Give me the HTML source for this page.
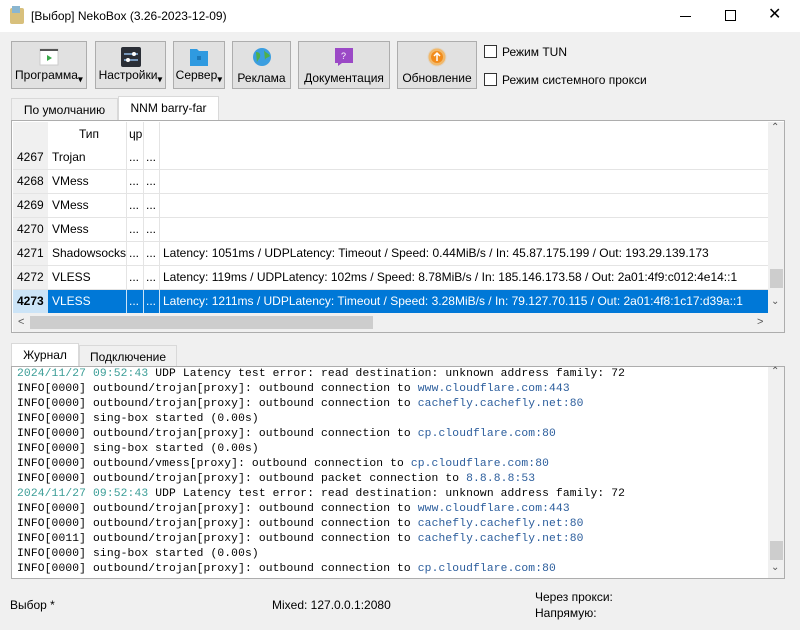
<!DOCTYPE html>
<html><head><meta charset="utf-8"><style>
*{box-sizing:border-box;margin:0;padding:0}
body{width:800px;height:630px;background:#f0f0f0;font-family:"Liberation Sans",sans-serif;font-size:12px;color:#000;position:relative;overflow:hidden}
.a{position:absolute}
.btn{position:absolute;top:41px;height:48px;background:#e1e1e1;border:1px solid #adadad;text-align:center;font-size:12px}
.btn .ic{position:absolute;top:5px;left:50%;margin-left:-10px;width:20px;height:20px}
.btn .t{position:absolute;bottom:3px;left:0;right:0;white-space:nowrap}
.cb{position:absolute;width:13px;height:13px;border:1px solid #333;background:#fff}
.tab{position:absolute;height:23px;border:1px solid #d9d9d9;border-bottom:none;text-align:center;line-height:22px;font-size:12px}
.row{position:absolute;left:13px;width:755px;height:24px;border-bottom:1px solid #e4e4e4;white-space:nowrap;line-height:23px}
.row span{position:absolute;top:0}
.mono{font-family:"Liberation Mono",monospace;font-size:11.3px;letter-spacing:0.13px;white-space:pre;line-height:15px}
.ts{color:#3a9d96}.ln{color:#2b5d9c}
</style></head><body>
<div class="a" style="left:0;top:0;width:800px;height:32px;background:#fff"></div>
<div class="a" style="left:10px;top:8px;width:14px;height:16px;background:#d8c07c;border-radius:2px"></div>
<div class="a" style="left:12px;top:6px;width:8px;height:7px;background:#8ab6d0"></div>
<div class="a" style="left:31px;top:9px;font-size:12px">[Выбор] NekoBox (3.26-2023-12-09)</div>
<div class="a" style="left:680px;top:16px;width:11px;height:1px;background:#000"></div>
<div class="a" style="left:725px;top:10px;width:11px;height:11px;border:1px solid #000"></div>
<div class="a" style="left:768px;top:4px;font-size:16px">✕</div>

<div class="btn" style="left:11px;width:76px"><svg class="ic" viewBox="0 0 20 20"><rect x="1" y="2" width="18" height="16" fill="#fff" stroke="#ccc"/><rect x="1" y="2" width="18" height="2" fill="#555"/><path d="M8 8l5 3-5 3z" fill="#3aa84a"/></svg><div class="t">Программа<sub>▾</sub></div></div>
<div class="btn" style="left:95px;width:71px"><svg class="ic" viewBox="0 0 20 20"><rect x="0" y="0" width="20" height="20" rx="2" fill="#2a2e36"/><path d="M3 7h14M3 13h14" stroke="#8fb8e6" stroke-width="1.5"/><circle cx="13" cy="7" r="2" fill="#fff"/><circle cx="7" cy="13" r="2" fill="#fff"/></svg><div class="t">Настройки<sub>▾</sub></div></div>
<div class="btn" style="left:173px;width:52px"><svg class="ic" viewBox="0 0 20 20"><path d="M1 2h7l2 2h9v15H1z" fill="#2f9ae0"/><rect x="8" y="9" width="4" height="4" fill="#1c78b8"/></svg><div class="t">Сервер<sub>▾</sub></div></div>
<div class="btn" style="left:232px;width:59px"><svg class="ic" viewBox="0 0 20 20"><circle cx="10" cy="10" r="9" fill="#3b9ee0"/><path d="M4 5c3 0 5 2 4 5s-3 3-3 6M12 3c1 3 5 3 6 6-2 2-4 1-5 4" fill="#4fb04a"/></svg><div class="t">Реклама</div></div>
<div class="btn" style="left:298px;width:92px"><svg class="ic" viewBox="0 0 20 20"><path d="M1 1h18v15H8l-4 3v-3H1z" fill="#9b49c6"/><text x="7" y="12" font-size="9" fill="#fff" font-family="Liberation Sans">?</text></svg><div class="t">Документация</div></div>
<div class="btn" style="left:397px;width:80px"><svg class="ic" viewBox="0 0 20 20"><circle cx="10" cy="10" r="9" fill="#f1b86a" stroke="#e0d6c8"/><circle cx="10" cy="10" r="6" fill="#f28c1c"/><path d="M10 6v8M7 9l3-3 3 3" stroke="#fff" stroke-width="1.5" fill="none"/></svg><div class="t">Обновление</div></div>
<div class="cb" style="left:484px;top:45px"></div><div class="a" style="left:502px;top:45px">Режим TUN</div>
<div class="cb" style="left:484px;top:73px"></div><div class="a" style="left:502px;top:73px">Режим системного прокси</div>

<div class="tab" style="left:11px;top:98px;width:107px;background:#f0f0f0">По умолчанию</div>
<div class="tab" style="left:118px;top:96px;width:101px;height:25px;background:#fff">NNM barry-far</div>
<div class="a" style="left:11px;top:120px;width:774px;height:213px;border:1px solid #adadad;background:#fff"></div>
<div class="a" style="left:13px;top:122px;width:35px;height:191px;background:#f0f0f0"></div>
<div class="a" style="left:79px;top:127px">Тип</div><div class="a" style="left:129px;top:127px">ɥр</div>
<div class="a" style="left:126px;top:122px;width:1px;height:191px;background:#e4e4e4"></div>
<div class="a" style="left:143px;top:122px;width:1px;height:191px;background:#e4e4e4"></div>
<div class="a" style="left:159px;top:122px;width:1px;height:191px;background:#e4e4e4"></div>
<div class="row" style="top:146px"><span style="left:4px">4267</span><span style="left:39px">Trojan</span><span style="left:116px">...</span><span style="left:133px">...</span></div>
<div class="row" style="top:170px"><span style="left:4px">4268</span><span style="left:39px">VMess</span><span style="left:116px">...</span><span style="left:133px">...</span></div>
<div class="row" style="top:194px"><span style="left:4px">4269</span><span style="left:39px">VMess</span><span style="left:116px">...</span><span style="left:133px">...</span></div>
<div class="row" style="top:218px"><span style="left:4px">4270</span><span style="left:39px">VMess</span><span style="left:116px">...</span><span style="left:133px">...</span></div>
<div class="row" style="top:242px"><span style="left:4px">4271</span><span style="left:39px">Shadowsocks</span><span style="left:116px">...</span><span style="left:133px">...</span><span style="left:150px">Latency: 1051ms / UDPLatency: Timeout / Speed: 0.44MiB/s / In: 45.87.175.199 / Out: 193.29.139.173</span></div>
<div class="row" style="top:266px"><span style="left:4px">4272</span><span style="left:39px">VLESS</span><span style="left:116px">...</span><span style="left:133px">...</span><span style="left:150px">Latency: 119ms / UDPLatency: 102ms / Speed: 8.78MiB/s / In: 185.146.173.58 / Out: 2a01:4f9:c012:4e14::1</span></div>
<div class="row" style="top:290px;background:#0078d7;color:#fff;border:none;height:23px"><span style="left:0;width:35px;height:23px;background:#cce4f7;color:#000;font-weight:bold;padding-left:4px">4273</span><span style="left:39px">VLESS</span><span style="left:113px;width:1px;height:23px;background:#cce4f7"></span><span style="left:116px">...</span><span style="left:130px;width:1px;height:23px;background:#cce4f7"></span><span style="left:133px">...</span><span style="left:146px;width:1px;height:23px;background:#cce4f7"></span><span style="left:150px">Latency: 1211ms / UDPLatency: Timeout / Speed: 3.28MiB/s / In: 79.127.70.115 / Out: 2a01:4f8:1c17:d39a::1</span></div>
<div class="a" style="left:768px;top:122px;width:16px;height:191px;background:#f0f0f0"></div>
<div class="a" style="left:771px;top:122px;font-size:10px;color:#555">⌃</div>
<div class="a" style="left:770px;top:269px;width:13px;height:19px;background:#cdcdcd"></div>
<div class="a" style="left:771px;top:296px;font-size:10px;color:#555">⌄</div>
<div class="a" style="left:13px;top:313px;width:771px;height:19px;background:#f0f0f0"></div>
<div class="a" style="left:18px;top:316px;font-size:11px;color:#555">&lt;</div>
<div class="a" style="left:30px;top:316px;width:343px;height:13px;background:#cdcdcd"></div>
<div class="a" style="left:757px;top:316px;font-size:11px;color:#555">&gt;</div>

<div class="tab" style="left:11px;top:343px;width:68px;height:24px;background:#fff">Журнал</div>
<div class="tab" style="left:79px;top:345px;width:98px;height:22px;background:#f0f0f0">Подключение</div>
<div class="a" style="left:11px;top:366px;width:774px;height:213px;border:1px solid #adadad;background:#fff"></div>
<div class="a" style="left:768px;top:367px;width:16px;height:211px;background:#f0f0f0"></div>
<div class="a" style="left:770px;top:541px;width:13px;height:19px;background:#cdcdcd"></div>
<div class="a" style="left:771px;top:366px;font-size:10px;color:#555">⌃</div>
<div class="a" style="left:771px;top:562px;font-size:10px;color:#555">⌄</div>
<div class="a" style="left:12px;top:367px;width:756px;height:211px;overflow:hidden"><div class="a mono" style="left:5px;top:0px;width:750px"><span class="ts">2024/11/27 09:52:43</span> UDP Latency test error: read destination: unknown address family: 72
INFO[0000] outbound/trojan[proxy]: outbound connection to <span class="ln">www.cloudflare.com:443</span>
INFO[0000] outbound/trojan[proxy]: outbound connection to <span class="ln">cachefly.cachefly.net:80</span>
INFO[0000] sing-box started (0.00s)
INFO[0000] outbound/trojan[proxy]: outbound connection to <span class="ln">cp.cloudflare.com:80</span>
INFO[0000] sing-box started (0.00s)
INFO[0000] outbound/vmess[proxy]: outbound connection to <span class="ln">cp.cloudflare.com:80</span>
INFO[0000] outbound/trojan[proxy]: outbound packet connection to <span class="ln">8.8.8.8:53</span>
<span class="ts">2024/11/27 09:52:43</span> UDP Latency test error: read destination: unknown address family: 72
INFO[0000] outbound/trojan[proxy]: outbound connection to <span class="ln">www.cloudflare.com:443</span>
INFO[0000] outbound/trojan[proxy]: outbound connection to <span class="ln">cachefly.cachefly.net:80</span>
INFO[0011] outbound/trojan[proxy]: outbound connection to <span class="ln">cachefly.cachefly.net:80</span>
INFO[0000] sing-box started (0.00s)
INFO[0000] outbound/trojan[proxy]: outbound connection to <span class="ln">cp.cloudflare.com:80</span></div></div>

<div class="a" style="left:10px;top:598px">Выбор *</div>
<div class="a" style="left:272px;top:598px">Mixed: 127.0.0.1:2080</div>
<div class="a" style="left:535px;top:590px">Через прокси:</div>
<div class="a" style="left:535px;top:606px">Напрямую:</div>
</body></html>
